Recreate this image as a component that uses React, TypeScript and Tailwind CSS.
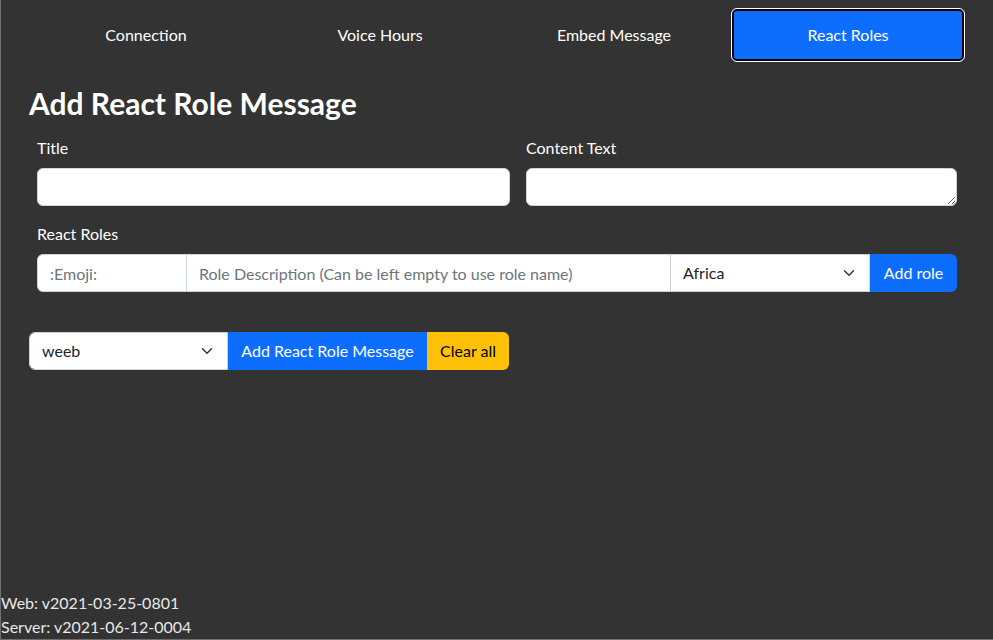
import { useState } from 'react';

const TABS = ['Connection', 'Voice Hours', 'Embed Message', 'React Roles'];

function Chevron() {
  return (
    <svg
      className="pointer-events-none absolute right-3 top-1/2 -translate-y-1/2"
      width="16"
      height="12"
      viewBox="0 0 16 16"
      fill="none"
    >
      <path d="M2 5l6 6 6-6" stroke="#343a40" strokeWidth="2" strokeLinecap="round" strokeLinejoin="round" />
    </svg>
  );
}

function Select({ value, options, className }: { value: string; options: string[]; className: string }) {
  return (
    <div className={`relative h-[38px] overflow-hidden border border-[#ced4da] bg-white ${className}`}>
      <select
        defaultValue={value}
        className="h-full w-full appearance-none bg-white pl-3 pr-9 text-[16px] text-[#212529] outline-none"
      >
        {options.map((o) => (
          <option key={o}>{o}</option>
        ))}
      </select>
      <Chevron />
    </div>
  );
}

export default function App() {
  const [active, setActive] = useState(3);

  return (
    <div
      className="flex min-h-screen flex-col border-l border-b border-[#6f6f6f] bg-[#333333] text-white"
      style={{ fontFamily: 'Lato, "Noto Sans", sans-serif' }}
    >
      <main className="mx-auto w-full max-w-[960px] flex-1 px-3 pt-2">
        {/* Tabs */}
        <nav className="flex">
          {TABS.map((t, i) => (
            <button
              key={t}
              onClick={() => setActive(i)}
              className={`flex h-[54px] flex-1 items-center justify-center rounded-md text-[16px] ${
                active === i
                  ? 'border border-white bg-[#0d6efd] shadow-[inset_0_0_0_2px_#000]'
                  : 'border border-transparent'
              }`}
            >
              {t}
            </button>
          ))}
        </nav>

        <h2 className="mt-[23px] mb-[15px] text-[30px] font-bold leading-[1.2]">Add React Role Message</h2>

        {/* Title / content */}
        <div className="flex">
          <div className="mb-4 w-[489px] shrink-0 px-2">
            <label className="mb-2 block text-[16px] leading-6">Title</label>
            <input className="h-[38px] w-full rounded-md border border-[#ced4da] bg-white px-3 text-[16px] text-[#212529] outline-none" />
          </div>
          <div className="mb-4 min-w-0 flex-1 px-2">
            <label className="mb-2 block text-[16px] leading-6">Content Text</label>
            <textarea
              rows={1}
              className="block h-[38px] min-h-[38px] w-full rounded-md border border-[#ced4da] bg-white px-3 py-1.5 text-[16px] text-[#212529] outline-none"
            />
          </div>
        </div>

        {/* React roles */}
        <div className="px-2">
          <label className="mb-2 block text-[16px] leading-6">React Roles</label>
          <div className="flex h-[38px]">
            <input
              placeholder=":Emoji:"
              className="h-[38px] w-[150px] rounded-l-md border border-[#ced4da] bg-white px-3 text-[16px] text-[#212529] outline-none placeholder:text-[#6c757d]"
            />
            <input
              placeholder="Role Description (Can be left empty to use role name)"
              className="-ml-px h-[38px] min-w-0 flex-1 border border-[#ced4da] bg-white px-3 text-[16px] text-[#212529] outline-none placeholder:text-[#6c757d]"
            />
            <Select value="Africa" options={['Africa', 'Asia', 'Europe']} className="-ml-px w-[200px]" />
            <button className="h-[38px] w-[87px] rounded-r-md bg-[#0d6efd] text-[16px] text-white">Add role</button>
          </div>
        </div>

        {/* Bottom actions */}
        <div className="mt-10 flex h-[38px]">
          <Select value="weeb" options={['weeb', 'general']} className="w-[199px] rounded-l-md" />
          <button className="h-[38px] w-[199px] bg-[#0d6efd] text-[16px] text-white">Add React Role Message</button>
          <button className="h-[38px] w-[82px] rounded-r-md bg-[#ffc107] text-[16px] text-black">Clear all</button>
        </div>
      </main>

      <footer className="text-[16px] leading-6 text-[#e8e8e8]">
        <div>Web: v2021-03-25-0801</div>
        <div>Server: v2021-06-12-0004</div>
      </footer>
    </div>
  );
}
